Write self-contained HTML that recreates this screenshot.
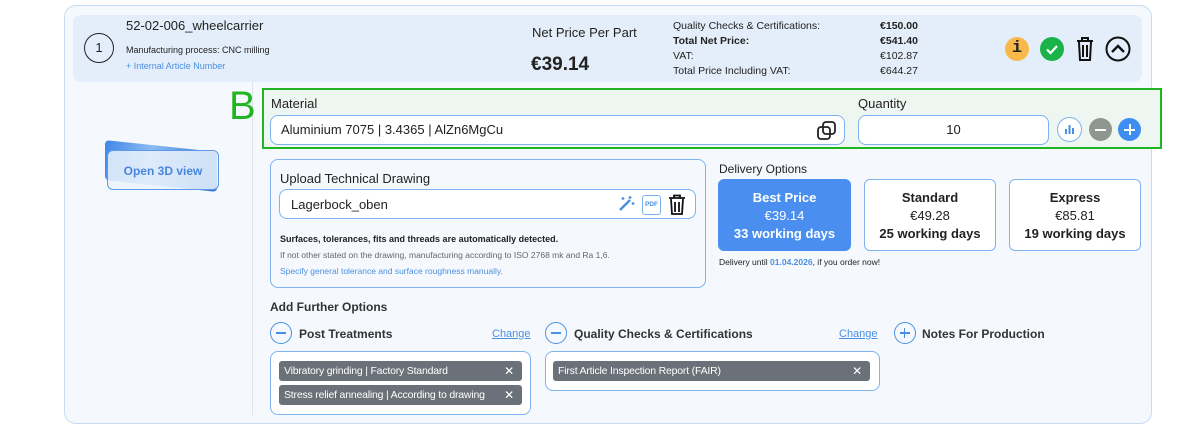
<!DOCTYPE html>
<html><head><meta charset="utf-8"><style>
*{box-sizing:border-box;margin:0;padding:0}
body{width:1192px;height:435px;background:#fff;font-family:"Liberation Sans",sans-serif;color:#222;position:relative;overflow:hidden}
.a{position:absolute}
.card{left:64px;top:5px;width:1088px;height:419px;border:1px solid #c5dcf5;border-radius:12px;background:#f5f9fd}
.hdr{left:73px;top:15px;width:1069px;height:67px;background:#e4eefa;border-radius:8px}
.box{border:1px solid #7eb3f0;border-radius:8px;background:#fff}
.tag{background:#6b7178;color:#fff;font-size:10.5px;border-radius:3px;height:20px;line-height:20px;padding-left:5px;letter-spacing:-0.2px}
.tag span{position:absolute;right:8px;top:0;font-size:12px}
.dopt{border:1px solid #7eb3f0;border-radius:6px;background:#fff;text-align:center;font-size:13px;line-height:18px;padding-top:9px}
</style></head><body>
<div class="a card"></div>
<div class="a hdr"></div>
<div class="a" style="left:84px;top:33px;width:30px;height:30px;border:1.5px solid #222;border-radius:50%;text-align:center;line-height:27px;font-size:13px">1</div>
<div class="a" style="left:126px;top:18px;font-size:13px">52-02-006_wheelcarrier</div>
<div class="a" style="left:126px;top:45px;font-size:9px">Manufacturing process: CNC milling</div>
<div class="a" style="left:126px;top:61px;font-size:9px;color:#4a90e2">+ Internal Article Number</div>
<div class="a" style="left:532px;top:25px;font-size:13px">Net Price Per Part</div>
<div class="a" style="left:531px;top:54px;font-size:19px;font-weight:bold">€39.14</div>
<div class="a" style="left:673px;top:19px;font-size:10.5px;line-height:15px">Quality Checks &amp; Certifications:<br><b>Total Net Price:</b><br>VAT:<br>Total Price Including VAT:</div>
<div class="a" style="left:860px;top:19px;width:58px;text-align:right;font-size:10.5px;line-height:15px"><b>€150.00</b><br><b>€541.40</b><br>€102.87<br>€644.27</div>
<div class="a" style="left:1005px;top:37px;width:24px;height:24px;border-radius:50%;background:#f9b94a;text-align:center;font:bold 17px/24px 'Liberation Mono',monospace">i</div>
<div class="a" style="left:1040px;top:37px;width:24px;height:24px;border-radius:50%;background:#19b34a"><svg width="24" height="24"><path d="M7 12.5l3.5 3.5 6.5-7" stroke="#fff" stroke-width="2.2" fill="none"/></svg></div>
<svg class="a" style="left:1074px;top:36px" width="22" height="26"><path d="M3 5h16M8 5V2h6v3M5 6l1 18h10l1-18M9 9v12M13 9v12" stroke="#111" stroke-width="2" fill="none"/></svg>
<svg class="a" style="left:1105px;top:36px" width="26" height="26"><circle cx="13" cy="13" r="11.5" stroke="#111" stroke-width="2" fill="none"/><path d="M7 16l6-6 6 6" stroke="#111" stroke-width="2.4" fill="none"/></svg>
<div class="a" style="left:252px;top:82px;width:1px;height:333px;background:#dde5ee"></div>
<div class="a" style="left:105px;top:146px;width:112px;height:40px;background:linear-gradient(100deg,#3f87e8,#8dbaf3 40%,#2f6fd1);transform:skewY(6deg);border-radius:4px"></div>
<div class="a" style="left:107px;top:150px;width:112px;height:40px;border:1px solid #5c9ae8;border-radius:6px;background:rgba(235,243,252,.85);color:#4a86e0;font-size:12px;font-weight:bold;text-align:center;line-height:40px">Open 3D view</div>
<div class="a" style="left:229px;top:84px;font-size:40px;color:#22b522;line-height:44px">B</div>
<div class="a" style="left:262px;top:88px;width:900px;height:61px;border:2px solid #22b522;background:#eef6f2"></div>
<div class="a" style="left:271px;top:96px;font-size:13px">Material</div>
<div class="a box" style="left:270px;top:115px;width:575px;height:30px;padding-left:10px;font-size:13px;line-height:28px">Aluminium 7075 | 3.4365 | AlZn6MgCu</div>
<svg class="a" style="left:816px;top:120px" width="22" height="22"><rect x="2" y="7" width="12" height="12" rx="3" stroke="#222" stroke-width="1.8" fill="#fff"/><rect x="7" y="2" width="12" height="12" rx="3" stroke="#222" stroke-width="1.8" fill="none"/></svg>
<div class="a" style="left:858px;top:96px;font-size:13px">Quantity</div>
<div class="a box" style="left:858px;top:115px;width:191px;height:30px;text-align:center;font-size:13px;line-height:28px">10</div>
<div class="a" style="left:1057px;top:117px;width:25px;height:25px;border:1px solid #7eb3f0;border-radius:50%;background:#fff"><svg width="23" height="23"><path d="M8 16V11M11.5 16V7M15 16V10" stroke="#4a90e2" stroke-width="2"/></svg></div>
<div class="a" style="left:1089px;top:118px;width:23px;height:23px;border-radius:50%;background:#8e9690"><div class="a" style="left:6px;top:10.5px;width:11px;height:2px;background:#fff"></div></div>
<div class="a" style="left:1118px;top:118px;width:23px;height:23px;border-radius:50%;background:#3d8ef0"><div class="a" style="left:6px;top:10.5px;width:11px;height:2px;background:#fff"></div><div class="a" style="left:10.5px;top:6px;width:2px;height:11px;background:#fff"></div></div>
<div class="a box" style="left:270px;top:159px;width:436px;height:129px;background:#f5f9fd"></div>
<div class="a" style="left:280px;top:171px;font-size:13px">Upload Technical Drawing</div>
<div class="a box" style="left:279px;top:189px;width:417px;height:30px;padding-left:11px;font-size:13px;line-height:29px">Lagerbock_oben</div>
<svg class="a" style="left:617px;top:195px" width="18" height="18"><path d="M3 15L13 5" stroke="#4a90e2" stroke-width="2.5"/><path d="M13 1v3M11.5 2.5h3M16 7v3M14.5 8.5h3M6 2v3M4.5 3.5h3" stroke="#4a90e2" stroke-width="1.3"/></svg>
<div class="a" style="left:642px;top:195px;width:19px;height:20px;border:1.5px solid #7ab0ee;border-radius:3px;font-size:6.5px;color:#4a90e2;text-align:center;line-height:17px;font-weight:bold">PDF</div>
<svg class="a" style="left:667px;top:194px" width="20" height="22"><path d="M2 4h16M7 4V1.5h6V4M4 5l1 15h10l1-15M8 8v10M12 8v10" stroke="#111" stroke-width="1.8" fill="none"/></svg>
<div class="a" style="left:280px;top:234px;font-size:9px;font-weight:bold">Surfaces, tolerances, fits and threads are automatically detected.</div>
<div class="a" style="left:280px;top:250px;font-size:8.5px;color:#666">If not other stated on the drawing, manufacturing according to ISO 2768 mk and Ra 1,6.</div>
<div class="a" style="left:280px;top:266px;font-size:8.5px;color:#4a90e2">Specify general tolerance and surface roughness manually.</div>
<div class="a" style="left:719px;top:162px;font-size:12px">Delivery Options</div>
<div class="a dopt" style="left:718px;top:179px;width:133px;height:72px;background:#4a8ff0;border-color:#4a8ff0;color:#fff"><b>Best Price</b><br>€39.14<br><b>33 working days</b></div>
<div class="a dopt" style="left:864px;top:179px;width:132px;height:72px"><b>Standard</b><br>€49.28<br><b>25 working days</b></div>
<div class="a dopt" style="left:1009px;top:179px;width:132px;height:72px"><b>Express</b><br>€85.81<br><b>19 working days</b></div>
<div class="a" style="left:719px;top:257px;font-size:8.5px">Delivery until <b style="color:#4a90e2">01.04.2026</b>, if you order now!</div>
<div class="a" style="left:270px;top:300px;font-size:12px;font-weight:bold;color:#333">Add Further Options</div>
<div class="a" style="left:270px;top:322px;width:22px;height:22px;border:1.5px solid #4a90e2;border-radius:50%"><div class="a" style="left:4.5px;top:9px;width:10px;height:1.6px;background:#4a90e2"></div></div>
<div class="a" style="left:299px;top:327px;font-size:12px;font-weight:bold;color:#333">Post Treatments</div>
<div class="a" style="left:492px;top:328px;font-size:11px;color:#4a90e2;text-decoration:underline">Change</div>
<div class="a" style="left:545px;top:322px;width:22px;height:22px;border:1.5px solid #4a90e2;border-radius:50%"><div class="a" style="left:4.5px;top:9px;width:10px;height:1.6px;background:#4a90e2"></div></div>
<div class="a" style="left:574px;top:327px;font-size:12px;font-weight:bold;color:#333">Quality Checks &amp; Certifications</div>
<div class="a" style="left:839px;top:328px;font-size:11px;color:#4a90e2;text-decoration:underline">Change</div>
<div class="a" style="left:894px;top:322px;width:22px;height:22px;border:1.5px solid #4a90e2;border-radius:50%"><div class="a" style="left:4.5px;top:9px;width:10px;height:1.6px;background:#4a90e2"></div><div class="a" style="left:8.7px;top:4.5px;width:1.6px;height:10px;background:#4a90e2"></div></div>
<div class="a" style="left:922px;top:327px;font-size:12px;font-weight:bold;color:#333">Notes For Production</div>
<div class="a box" style="left:270px;top:351px;width:261px;height:64px"></div>
<div class="a tag" style="left:279px;top:361px;width:243px">Vibratory grinding | Factory Standard<span>✕</span></div>
<div class="a tag" style="left:279px;top:385px;width:243px">Stress relief annealing | According to drawing<span>✕</span></div>
<div class="a box" style="left:545px;top:351px;width:335px;height:40px"></div>
<div class="a tag" style="left:553px;top:361px;width:317px">First Article Inspection Report (FAIR)<span>✕</span></div>
</body></html>
